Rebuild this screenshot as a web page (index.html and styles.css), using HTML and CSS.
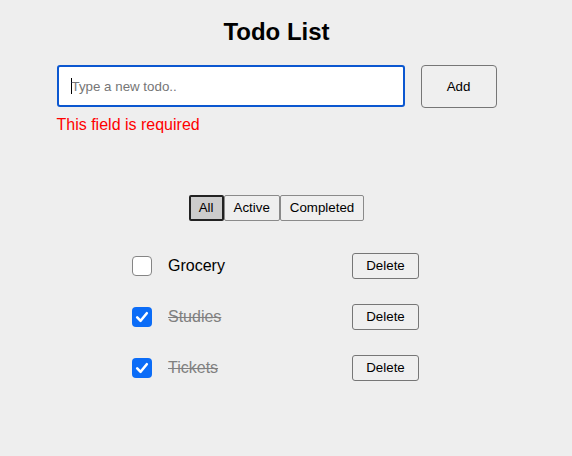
FILE: index.html
```html
<!DOCTYPE html>
<html lang="en">
<head>
<meta charset="utf-8">
<title>Todo List</title>
<link rel="stylesheet" href="styles.css">
</head>
<body>
<div class="app">
  <h1 class="title">Todo List</h1>
  <form class="todo-form">
    <div class="input-row">
      <div class="input-box"><span class="caret"></span><span class="placeholder">Type a new todo..</span></div>
      <button type="button" class="btn add-btn">Add</button>
    </div>
    <div class="error">This field is required</div>
  </form>
  <div class="filters">
    <button type="button" class="btn filter selected">All</button><button type="button" class="btn filter">Active</button><button type="button" class="btn filter">Completed</button>
  </div>
  <ul class="todos">
    <li class="todo">
      <div class="left">
        <span class="check"></span>
        <span class="label">Grocery</span>
      </div>
      <button type="button" class="btn del-btn">Delete</button>
    </li>
    <li class="todo done">
      <div class="left">
        <span class="check checked"><svg viewBox="0 0 20 20" width="20" height="20"><path d="M5.2 10.4 L8.6 13.8 L14.8 6.2" fill="none" stroke="#fff" stroke-width="2.6" stroke-linecap="round" stroke-linejoin="round"/></svg></span>
        <span class="label">Studies</span>
      </div>
      <button type="button" class="btn del-btn">Delete</button>
    </li>
    <li class="todo done">
      <div class="left">
        <span class="check checked"><svg viewBox="0 0 20 20" width="20" height="20"><path d="M5.2 10.4 L8.6 13.8 L14.8 6.2" fill="none" stroke="#fff" stroke-width="2.6" stroke-linecap="round" stroke-linejoin="round"/></svg></span>
        <span class="label">Tickets</span>
      </div>
      <button type="button" class="btn del-btn">Delete</button>
    </li>
  </ul>
</div>
</body>
</html>
```
FILE: styles.css
```css
html, body {
  margin: 0;
  padding: 0;
  background: #eeeeee;
  font-family: "Liberation Sans", Arial, sans-serif;
  color: #000;
}

.app {
  width: 553px;
  padding-top: 18px;
  display: flex;
  flex-direction: column;
  align-items: center;
}

.title {
  margin: 0;
  font-size: 24px;
  line-height: 28px;
  font-weight: bold;
}

.todo-form {
  width: 440px;
  margin-top: 19px;
  display: flex;
  flex-direction: column;
}

.input-row {
  display: flex;
  gap: 16px;
}

.input-box {
  box-sizing: border-box;
  width: 348px;
  height: 42px;
  background: #fff;
  border: 2px solid #0b57d0;
  border-radius: 3px;
  padding-left: 12px;
  display: flex;
  align-items: center;
  font-size: 13.333px;
}

.caret {
  width: 1px;
  height: 16px;
  background: #000;
}

.placeholder {
  color: #767676;
}

.btn {
  font-family: "Liberation Sans", Arial, sans-serif;
  font-size: 13.333px;
  line-height: 16px;
  color: #000;
  background: #efefef;
  border: 1px solid #767676;
  border-radius: 3px;
  margin: 0;
  box-sizing: border-box;
}

.add-btn {
  width: 76px;
  height: 43px;
  border-radius: 4px;
}

.error {
  margin-top: 8px;
  color: #ff0000;
  font-size: 16px;
  line-height: 18px;
}

.filters {
  margin-top: 61px;
  display: flex;
}

.filter {
  height: 26px;
  padding: 4px 9px;
  border-radius: 2px;
  border-color: #8a8a8a;
}

.filter.selected {
  background: #cccccc;
  border: 2px solid #222;
  padding: 3px 8px;
}

.todos {
  list-style: none;
  margin: 32px 2px 0 0;
  padding: 0;
  width: 287px;
  display: flex;
  flex-direction: column;
  gap: 25px;
}

.todo {
  display: flex;
  align-items: center;
  justify-content: space-between;
  height: 26px;
}

.left {
  display: flex;
  align-items: center;
  gap: 16px;
}

.check {
  box-sizing: border-box;
  width: 20px;
  height: 20px;
  border-radius: 4px;
  background: #fff;
  border: 1.5px solid #858585;
  display: block;
}

.check.checked {
  background: #0b6cf7;
  border: none;
}

.check svg {
  display: block;
}

.label {
  font-size: 16px;
  line-height: 18px;
}

.todo.done .label {
  color: #808080;
  text-decoration: line-through;
}

.del-btn {
  height: 26px;
  padding: 4px 13px;
  width: 67px;
}
```
